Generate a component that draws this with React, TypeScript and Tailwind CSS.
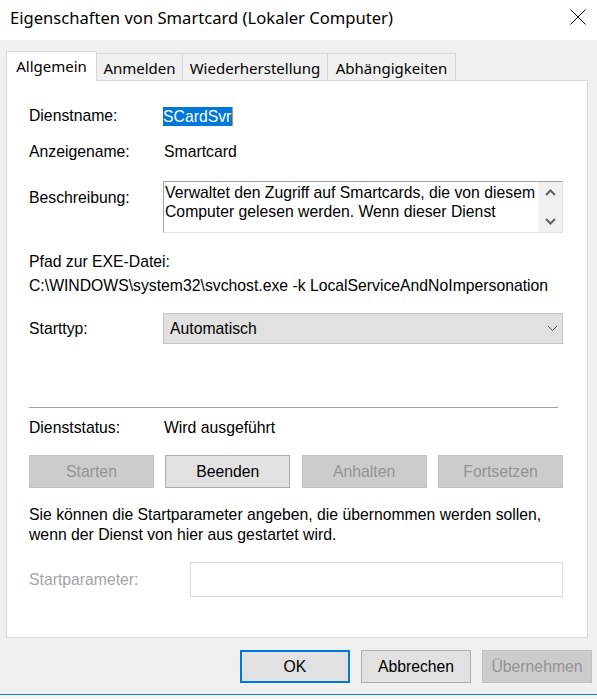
import React from "react";

// Windows property sheet for the Smartcard service
const body = "font-['Liberation_Sans',Arial,sans-serif] text-[15.75px] text-black";
const ui = "font-['Noto_Sans',sans-serif]";

const tabs = [
  { label: "Allgemein", width: "w-[91px]", active: true },
  { label: "Anmelden", width: "w-[86px]", active: false },
  { label: "Wiederherstellung", width: "w-[145px]", active: false },
  { label: "Abhängigkeiten", width: "w-[128px]", active: false },
];

const Button = ({
  label,
  disabled,
  primary,
  className,
}: {
  label: string;
  disabled?: boolean;
  primary?: boolean;
  className: string;
}) => (
  <button
    type="button"
    className={
      className +
      " flex items-center justify-center leading-none " +
      (disabled
        ? "bg-[#cccccc] border border-[#bfbfbf] text-[#939393]"
        : primary
          ? "bg-[#e1e1e1] border-2 border-[#0078d7] text-black"
          : "bg-[#e1e1e1] border border-[#adadad] text-black")
    }
  >
    {label}
  </button>
);

const ChevronUp = () => (
  <svg width="11" height="7" viewBox="0 0 11 7">
    <polyline points="1,6 5.5,1.5 10,6" fill="none" stroke="#606060" strokeWidth="2" />
  </svg>
);

const ChevronDown = ({ color = "#606060", width = 2 }: { color?: string; width?: number }) => (
  <svg width="11" height="7" viewBox="0 0 11 7">
    <polyline points="1,1 5.5,5.5 10,1" fill="none" stroke={color} strokeWidth={width} />
  </svg>
);

export default function App() {
  return (
    <div className={"w-[597px] h-[699px] overflow-hidden flex flex-col bg-white " + body}>
      {/* title bar */}
      <div className="h-[40px] shrink-0 bg-white flex items-center justify-between pl-[10px] pr-[11px]">
        <span className={ui + " text-[16.6px] leading-none text-black -mt-[4px]"}>
          Eigenschaften von Smartcard (Lokaler Computer)
        </span>
        <svg width="16" height="16" viewBox="0 0 16 16" className="-mt-[7px]">
          <line x1="0.5" y1="0.5" x2="15.5" y2="15.5" stroke="#000" strokeWidth="1" />
          <line x1="15.5" y1="0.5" x2="0.5" y2="15.5" stroke="#000" strokeWidth="1" />
        </svg>
      </div>

      <div className="h-[654px] shrink-0 bg-[#f0f0f0] flex flex-col">
        {/* tabs */}
        <div className="flex items-end h-[40px] pl-[6px]">
          {tabs.map((tab) =>
            tab.active ? (
              <div
                key={tab.label}
                className={
                  tab.width +
                  " " +
                  ui +
                  " relative z-10 -mb-px h-[30px] bg-white border border-b-0 border-[#d9d9d9] flex justify-center pt-[4px] text-[15px] leading-[20px]"
                }
              >
                {tab.label}
              </div>
            ) : (
              <div
                key={tab.label}
                className={
                  tab.width +
                  " " +
                  ui +
                  " h-[27px] bg-[#f0f0f0] border border-b-0 border-l-0 border-[#d9d9d9] flex justify-center pt-[4px] text-[15px] leading-[20px]"
                }
              >
                {tab.label}
              </div>
            ),
          )}
        </div>

        {/* general page */}
        <div className="ml-[6px] w-[582px] h-[558px] bg-white border border-[#d9d9d9] pl-[22px] pr-[24px] pt-[25px] flex flex-col">
          <div className="flex h-[20px] items-center">
            <span className="w-[134px]">Dienstname:</span>
            <span className="relative bg-[#0078d7] text-white h-[19px] leading-[19px] pr-[2px]">
              SCardSvr
              <span className="absolute right-0 top-0 h-[19px] w-px bg-[#f08c28]" />
            </span>
          </div>

          <div className="flex h-[20px] items-center mt-[16px]">
            <span className="w-[134px]">Anzeigename:</span>
            <span className="pl-px">Smartcard</span>
          </div>

          <div className="flex mt-[19px]">
            <span className="w-[134px] mt-[7px] leading-[20px]">Beschreibung:</span>
            <div className="flex-1 h-[52px] flex border-t border-l border-[#a0a0a0] border-r border-b border-r-[#e3e3e3] border-b-[#e3e3e3] overflow-hidden">
              <div className="flex-1 pl-[1px] pt-[1px] leading-[19px] whitespace-nowrap">
                <div>Verwaltet den Zugriff auf Smartcards, die von diesem</div>
                <div>Computer gelesen werden. Wenn dieser Dienst</div>
              </div>
              <div className="w-[24px] shrink-0 h-[50px] bg-[#f0f0f0] flex flex-col items-center justify-between py-[7px]">
                <ChevronUp />
                <ChevronDown />
              </div>
            </div>
          </div>

          <div className="mt-[19px] h-[20px] leading-[20px]">Pfad zur EXE-Datei:</div>
          <div className="mt-[4px] h-[20px] leading-[20px] whitespace-nowrap">
            C:\WINDOWS\system32\svchost.exe -k LocalServiceAndNoImpersonation
          </div>

          <div className="flex items-center mt-[17px]">
            <span className="w-[134px]">Starttyp:</span>
            <div className="flex-1 h-[31px] bg-[#e1e1e1] border border-[#c4c4c4] flex items-center justify-between pl-[6px] pr-[4px]">
              <span>Automatisch</span>
              <ChevronDown color="#505050" width={1} />
            </div>
          </div>

          <div className="mt-[63px] h-px w-[529px] bg-[#a0a0a0]" />

          <div className="flex h-[20px] items-center mt-[10px]">
            <span className="w-[134px]">Dienststatus:</span>
            <span className="pl-px">Wird ausgeführt</span>
          </div>

          <div className="flex justify-between mt-[17px]">
            <Button className="w-[125px] h-[33px]" label="Starten" disabled />
            <Button className="w-[125px] h-[33px]" label="Beenden" />
            <Button className="w-[125px] h-[33px]" label="Anhalten" disabled />
            <Button className="w-[125px] h-[33px]" label="Fortsetzen" disabled />
          </div>

          <p className="mt-[17px] leading-[20px] whitespace-nowrap">
            Sie können die Startparameter angeben, die übernommen werden sollen,
            <br />
            wenn der Dienst von hier aus gestartet wird.
          </p>

          <div className="flex items-center mt-[17px]">
            <span className="w-[161px] text-[#a3a3a3]">Startparameter:</span>
            <div className="flex-1 h-[35px] bg-white border border-[#d9d9d9]" />
          </div>
        </div>

        {/* dialog buttons */}
        <div className="flex justify-end gap-[11px] pr-[5px] mt-[12px]">
          <Button className="w-[110px] h-[33px]" label="OK" primary />
          <Button className="w-[110px] h-[33px]" label="Abbrechen" />
          <Button className="w-[110px] h-[33px]" label="Übernehmen" disabled />
        </div>
      </div>

      {/* window border and the services list behind it */}
      <div className="h-px shrink-0 bg-[#1883d7]" />
      <div className={ui + " relative flex-1 bg-[#f4f4f4] overflow-hidden text-[15px] leading-none"}>
        <span className="absolute left-[-2px] top-[2px]">rm</span>
        <span className="absolute left-[380px] top-[2px]">Manuell</span>
        <span className="absolute left-[483px] top-[2px]">Lokaler Dienst</span>
      </div>
    </div>
  );
}
